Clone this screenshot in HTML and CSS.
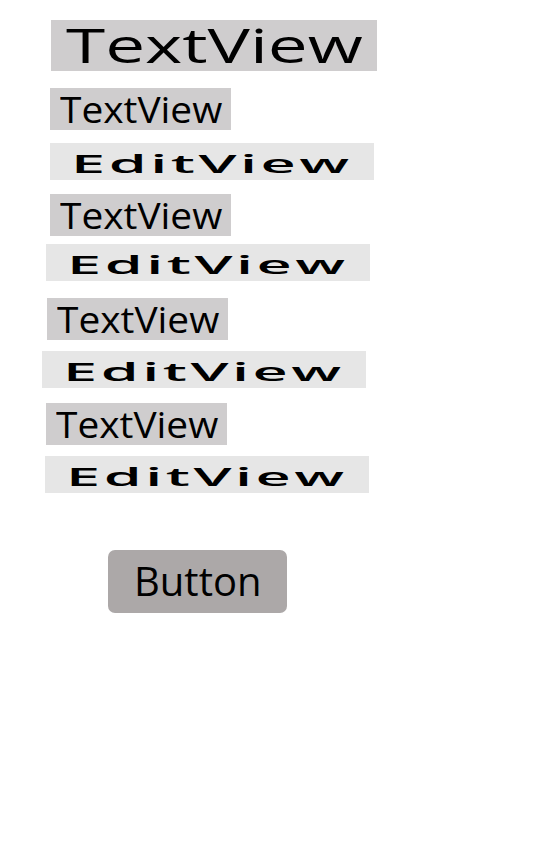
FILE: index.html
```html
<!DOCTYPE html>
<html lang="en">
<head>
<meta charset="utf-8">
<title>Layout</title>
<link rel="stylesheet" href="styles.css">
</head>
<body>
<main class="screen">
  <div class="tv tv-lg"><span class="txt">TextView</span></div>
  <div class="tv row-2"><span class="txt">TextView</span></div>
  <div class="ev row-3"><span class="txt">EditView</span></div>
  <div class="tv row-4"><span class="txt">TextView</span></div>
  <div class="ev row-5"><span class="txt">EditView</span></div>
  <div class="tv row-6"><span class="txt">TextView</span></div>
  <div class="ev row-7"><span class="txt">EditView</span></div>
  <div class="tv row-8"><span class="txt">TextView</span></div>
  <div class="ev row-9"><span class="txt">EditView</span></div>
  <button class="btn" type="button"><span class="txt">Button</span></button>
</main>
</body>
</html>
```

FILE: styles.css
```css
html, body {
  margin: 0;
  padding: 0;
  background: #ffffff;
}

.screen {
  width: 540px;
  height: 864px;
  display: flex;
  flex-direction: column;
  align-items: flex-start;
  font-family: "Open Sans", "Noto Sans", sans-serif;
  color: #000000;
}

.txt {
  display: inline-block;
  transform-origin: left center;
  white-space: nowrap;
}

/* TextView boxes */
.tv {
  box-sizing: border-box;
  width: 181px;
  height: 42px;
  background: #cfcdce;
  font-size: 37px;
  line-height: 41px;
  padding-left: 10px;
}
.tv .txt {
  transform: scaleX(1.05);
}

.tv-lg {
  margin-top: 20px;
  margin-left: 51px;
  width: 326px;
  height: 51px;
  font-size: 48px;
  line-height: 49px;
  padding-left: 15px;
}
.tv-lg .txt {
  transform: scaleX(1.48);
}

/* EditView boxes */
.ev {
  box-sizing: border-box;
  width: 324px;
  height: 37px;
  background: #e6e6e6;
  font-size: 26px;
  font-weight: 600;
  line-height: 34px;
  padding-top: 3px;
  padding-left: 21px;
  letter-spacing: 1.5px;
}
.ev .txt {
  transform: scaleX(2.35);
}

/* placement of each row */
.row-2 { margin-top: 17px; margin-left: 50px; }
.row-3 { margin-top: 13px; margin-left: 50px; }
.row-4 { margin-top: 14px; margin-left: 50px; }
.row-5 { margin-top: 8px;  margin-left: 46px; }
.row-6 { margin-top: 17px; margin-left: 47px; }
.row-7 { margin-top: 11px; margin-left: 42px; }
.row-8 { margin-top: 15px; margin-left: 46px; }
.row-9 { margin-top: 11px; margin-left: 45px; }

/* Button */
.btn {
  box-sizing: border-box;
  margin-top: 57px;
  margin-left: 108px;
  width: 179px;
  height: 63px;
  padding: 0 0 2px 26px;
  border: none;
  border-radius: 7px;
  background: #aca8a8;
  color: #000000;
  font-family: "Open Sans", "Noto Sans", sans-serif;
  font-size: 40px;
  line-height: 61px;
  text-align: left;
}
```
